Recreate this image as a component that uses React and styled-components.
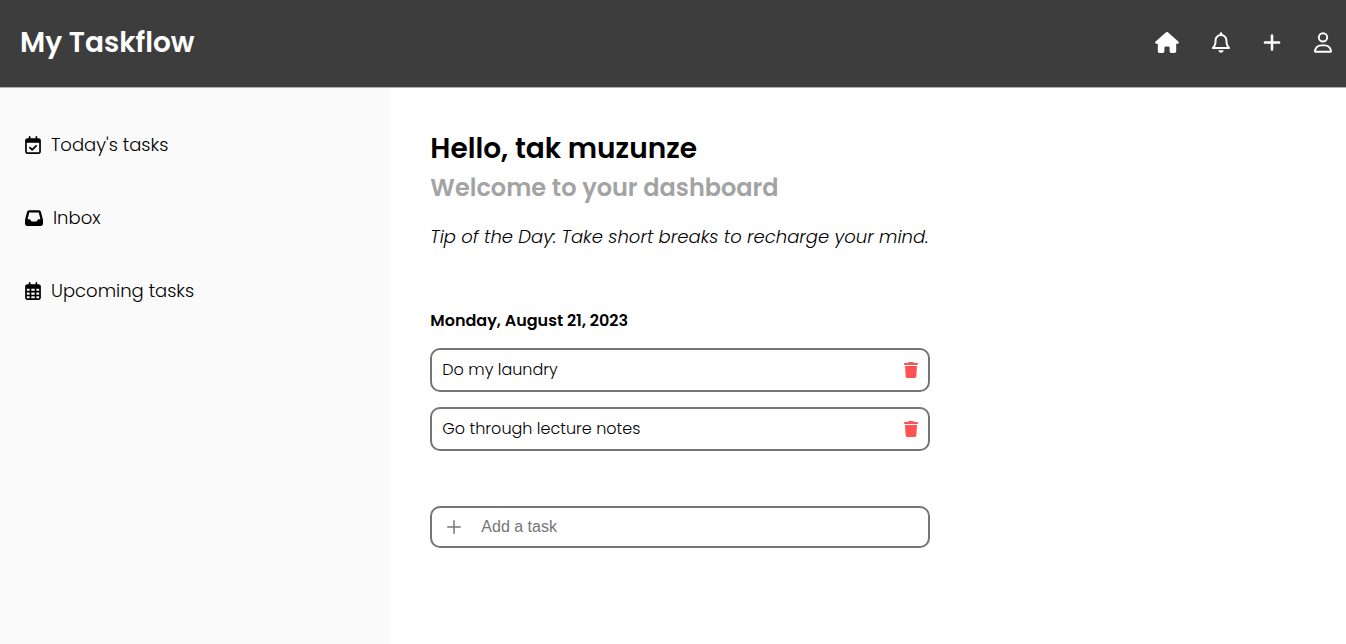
import React from "react";
import styled, { createGlobalStyle } from "styled-components";
import {
  FaHouse,
  FaRegBell,
  FaPlus,
  FaRegUser,
  FaRegCalendarCheck,
  FaInbox,
  FaRegCalendarDays,
  FaTrash,
} from "react-icons/fa6";

const GlobalStyle = createGlobalStyle`
  * { box-sizing: border-box; margin: 0; padding: 0; }
  body {
    background: #fff;
    color: #000;
    font-family: Poppins, Inter, sans-serif;
    font-size: 16px;
    font-weight: 300;
  }
`;

const Page = styled.div`
  min-height: 100vh;
  display: flex;
  flex-direction: column;
`;

const Header = styled.header`
  display: flex;
  align-items: center;
  justify-content: space-between;
  padding: 20px 14px 22px 20px;
  background: #3d3d3d;
  border-bottom: 1px solid #b0b0b0;
`;

const Brand = styled.h1`
  color: #fff;
  font-size: 28px;
  line-height: 45px;
  font-weight: 600;
`;

const Actions = styled.nav`
  display: flex;
  align-items: center;
  gap: 33px;
`;

const IconButton = styled.button`
  display: flex;
  border: 0;
  background: none;
  color: ${(p) => p.$color || "#fff"};
  cursor: pointer;

  svg {
    width: ${(p) => p.$width}px;
    height: ${(p) => p.$height || 21}px;
  }
`;

const Body = styled.div`
  flex: 1;
  display: flex;
`;

const Sidebar = styled.aside`
  width: 29%;
  padding: 43px 25px;
  background: #fafafa;
`;

const Menu = styled.ul`
  display: flex;
  flex-direction: column;
  gap: 46px;
  list-style: none;
`;

const MenuLink = styled.a`
  display: flex;
  align-items: center;
  gap: 10px;
  color: #000;
  font-size: 18px;
  line-height: 27px;
  text-decoration: none;

  svg {
    width: ${(p) => p.$iconWidth}px;
    height: 18px;
  }
`;

const Main = styled.main`
  flex: 1;
  padding: 40px;
`;

const Content = styled.div`
  max-width: 500px;
`;

const Greeting = styled.h2`
  font-size: 28px;
  line-height: 42px;
  font-weight: 600;
`;

const Welcome = styled.h3`
  color: #a3a3a3;
  font-size: 24px;
  line-height: 36px;
  font-weight: 600;
`;

const Tip = styled.p`
  margin-top: 17px;
  font-size: 18px;
  line-height: 27px;
  font-style: italic;
  white-space: nowrap;
`;

const DateHeading = styled.h4`
  margin-top: 59px;
  font-size: 16px;
  line-height: 24px;
  font-weight: 600;
`;

const TaskList = styled.ul`
  display: flex;
  flex-direction: column;
  gap: 15px;
  margin-top: 15px;
  list-style: none;
`;

const Task = styled.li`
  display: flex;
  align-items: center;
  justify-content: space-between;
  padding: 8px 10px;
  border: 2px solid #757575;
  border-radius: 10px;
  line-height: 24px;
`;

const AddTask = styled.label`
  display: flex;
  align-items: center;
  gap: 20px;
  margin-top: 55px;
  padding: 9px 15px;
  border: 2px solid #757575;
  border-radius: 10px;
  color: #757575;
`;

const TaskInput = styled.input`
  flex: 1;
  border: 0;
  outline: 0;
  background: none;
  font-family: "Liberation Sans", Arial, sans-serif;
  font-size: 16px;
  line-height: 20px;

  &::placeholder { color: #757575; }
`;

const menu = [
  { label: "Today's tasks", Icon: FaRegCalendarCheck, width: 16 },
  { label: "Inbox", Icon: FaInbox, width: 18 },
  { label: "Upcoming tasks", Icon: FaRegCalendarDays, width: 16 },
];

const actions = [
  { label: "Home", Icon: FaHouse, width: 24 },
  { label: "Notifications", Icon: FaRegBell, width: 18 },
  { label: "New task", Icon: FaPlus, width: 18 },
  { label: "Account", Icon: FaRegUser, width: 18 },
];

const tasks = ["Do my laundry", "Go through lecture notes"];

function ThinPlus() {
  return (
    <svg width="14" height="14" viewBox="0 0 14 14" fill="none" stroke="currentColor" strokeWidth="1.5" strokeLinecap="round" aria-hidden="true">
      <path d="M7 0.8V13.2M0.8 7H13.2" />
    </svg>
  );
}

export default function App() {
  return (
    <Page>
      <GlobalStyle />
      <Header>
        <Brand>My Taskflow</Brand>
        <Actions>
          {actions.map(({ label, Icon, width }) => (
            <IconButton key={label} type="button" aria-label={label} $width={width}>
              <Icon />
            </IconButton>
          ))}
        </Actions>
      </Header>
      <Body>
        <Sidebar>
          <Menu>
            {menu.map(({ label, Icon, width }) => (
              <li key={label}>
                <MenuLink href="#" $iconWidth={width}>
                  <Icon />
                  {label}
                </MenuLink>
              </li>
            ))}
          </Menu>
        </Sidebar>
        <Main>
          <Content>
            <Greeting>Hello, tak muzunze</Greeting>
            <Welcome>Welcome to your dashboard</Welcome>
            <Tip>Tip of the Day: Take short breaks to recharge your mind.</Tip>
            <DateHeading>Monday, August 21, 2023</DateHeading>
            <TaskList>
              {tasks.map((task) => (
                <Task key={task}>
                  {task}
                  <IconButton type="button" aria-label={`Delete ${task}`} $color="#ff5353" $width={14} $height={16}>
                    <FaTrash />
                  </IconButton>
                </Task>
              ))}
            </TaskList>
            <AddTask>
              <ThinPlus />
              <TaskInput type="text" placeholder="Add a task" aria-label="Add a task" />
            </AddTask>
          </Content>
        </Main>
      </Body>
    </Page>
  );
}
